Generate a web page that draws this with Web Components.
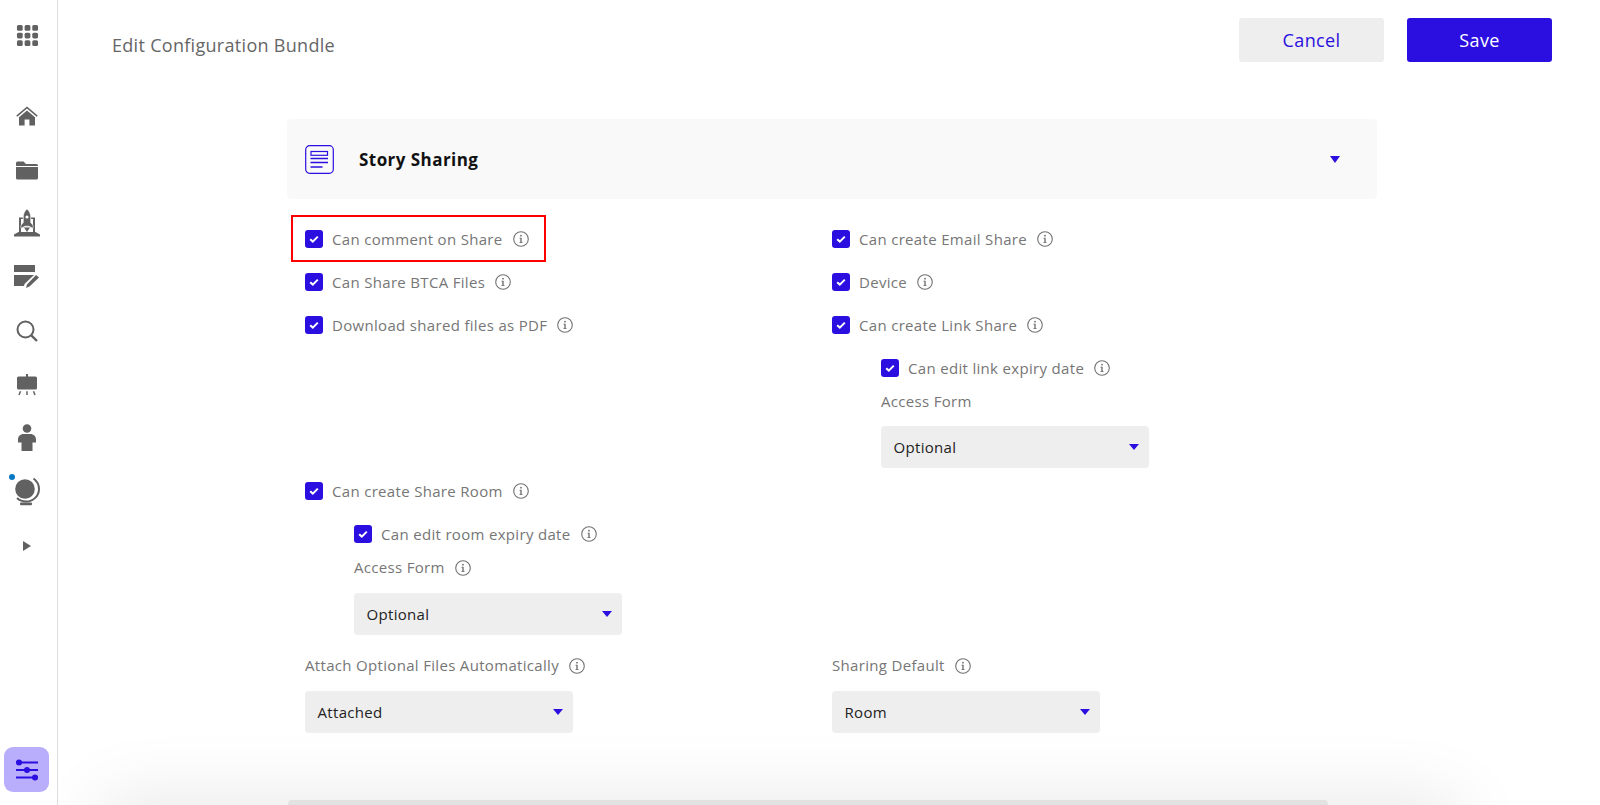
<!DOCTYPE html>
<html><head><meta charset="utf-8">
<style>
html,body{margin:0;height:805px;overflow:hidden;background:#fff;font-family:"Open Sans","Noto Sans",sans-serif}
</style></head><body>
<template id="t-check"><style>
:host{display:flex;align-items:center;height:43px;font-size:15px;letter-spacing:.32px;color:#767676}
.b{width:18px;height:18px;border-radius:3px;background:#2a0fe0;display:flex;align-items:center;justify-content:center;margin-right:9px;flex:none}
.i{margin-left:10px;margin-top:1px}
</style><span class="b"><svg width="12" height="12" viewBox="0 0 12 12"><path d="M2.200 6.200 4.800 8.600 9.800 3.600" fill="none" stroke="#fff" stroke-width="2"/></svg></span><slot></slot><x-info class="i"></x-info></template>

<template id="t-info"><style>:host{display:inline-flex;flex:none}</style><svg width="16" height="16" viewBox="0 0 16 16"><circle cx="8" cy="8" r="7.300" fill="none" stroke="#727272" stroke-width="1.100"/><rect x="7.300" y="6.800" width="1.400" height="4.800" fill="#727272"/><rect x="6.500" y="6.800" width="1.500" height=".9" fill="#727272"/><rect x="6.500" y="11" width="3" height=".9" fill="#727272"/><circle cx="8" cy="4.700" r=".9" fill="#727272"/></svg></template>

<template id="t-select"><style>
:host{display:flex;align-items:center;justify-content:space-between;height:42px;width:268px;box-sizing:border-box;padding:0 10.500px 0 12.500px;background:#eee;border-radius:4px;font-size:15px;letter-spacing:.32px;color:#222}
i{width:0;height:0;border-left:5px solid transparent;border-right:5px solid transparent;border-top:6.500px solid #2a0fe0}
</style><slot></slot><i></i></template>

<template id="t-label"><style>
:host{display:flex;align-items:center;font-size:15px;letter-spacing:.32px;color:#767676}
x-info{margin-left:10px;margin-top:1px}
</style><slot></slot></template>

<template id="t-nav"><style>
:host{display:flex;align-items:center;justify-content:center;width:54px;height:53.750px;color:#616161}
::slotted(svg){display:block}
</style><slot></slot></template>

<template id="t-sidebar"><style>
:host{display:flex;flex-direction:column;flex:none;height:805px;box-sizing:border-box;border-right:1px solid #ddd;width:58px}
.top{width:54px;height:89px;box-sizing:border-box;padding-top:24px;display:flex;justify-content:center}
.tile{margin:auto 0 13px 4px;width:45px;height:45px;border-radius:9px;background:#b9aefc;display:flex;align-items:center;justify-content:center}
</style>
<div class="top"><slot name="top"></slot></div><slot></slot><div class="tile"><slot name="tile"></slot></div></template>

<template id="t-panel"><style>
:host{display:flex;align-items:center;height:80px;background:#f9f9f9;border-radius:4px;padding:0 37px 0 18px;box-sizing:border-box}
.t{font-size:17px;font-weight:700;letter-spacing:.45px;color:#111;margin-left:25px;flex:1}
svg{display:block}
i{width:0;height:0;margin-top:1px;border-left:5.500px solid transparent;border-right:5.500px solid transparent;border-top:7px solid #2a0fe0}
</style><svg width="29" height="29" viewBox="0 0 29 29" fill="none" stroke="#2a0fe0"><rect x=".7" y=".7" width="27.600" height="27.600" rx="4" stroke-width="1.200"/><rect x="6" y="6.500" width="16.500" height="3.800" stroke-width="1.200"/><path d="M5.500 13.500h17.500M5.500 17.500h17.500M5.500 22h12" stroke-width="1.300"/></svg><span class="t"><slot></slot></span><i></i></template>

<template id="t-button"><style>
:host{display:flex;align-items:center;justify-content:center;width:145px;height:44px;box-sizing:border-box;padding-bottom:1px;border-radius:3px;font-size:18px;letter-spacing:.35px;background:#eee;color:#2a0fe0}
:host([primary]){background:#2a0fe0;color:#fff}
</style><slot></slot></template>

<template id="t-app"><style>
:host{display:flex;height:805px;overflow:hidden}
main{flex:1;min-width:0;display:flex;flex-direction:column;overflow:hidden}
header{display:flex;align-items:flex-start;height:119px;flex:none;box-sizing:border-box;padding:18px 48px 0 54px}
h1{margin:16px auto 0 0;font-size:18px;letter-spacing:.3px;line-height:22px;font-weight:400;color:#666}
.btns{display:flex;gap:23px}
.body{width:1090px;margin-left:229px}
.grid{display:grid;grid-template-columns:527px 1fr;padding:18px 0 0 18px}
.col{display:flex;flex-direction:column}
.nest{margin-left:49px}
.fld x-label{height:22px;margin-bottom:15px}
.row3{padding-top:19px}
.ghost{margin-top:auto;margin-left:230px;flex:none;height:5px;width:1040px;background:#e2e2e2;border-radius:4px 4px 0 0;box-shadow:-28px 155px 70px 160px rgba(0,0,0,.085)}
.mark{outline:2px solid #f00;margin-left:-12px;padding-left:12px;width:239px;height:43px}
</style>
<x-sidebar></x-sidebar>
<main>
<header><h1>Edit Configuration Bundle</h1><div class="btns"><x-button>Cancel</x-button><x-button primary>Save</x-button></div></header>
<div class="body">
<x-panel>Story Sharing</x-panel>
<div class="grid">
  <div class="col">
    <x-check class="mark">Can comment on Share</x-check>
    <x-check>Can Share BTCA Files</x-check>
    <x-check>Download shared files as PDF</x-check>
  </div>
  <div class="col">
    <x-check>Can create Email Share</x-check>
    <x-check>Device</x-check>
    <x-check>Can create Link Share</x-check>
    <div class="nest">
      <x-check>Can edit link expiry date</x-check>
      <x-label style="height:22px;margin:1px 0 14px">Access Form</x-label>
      <x-select>Optional</x-select>
    </div>
  </div>
  <div class="col">
    <x-check style="margin-top:1px">Can create Share Room</x-check>
    <div class="nest">
      <x-check>Can edit room expiry date</x-check>
      <x-label info style="height:22px;margin:1px 0 15px">Access Form</x-label>
      <x-select>Optional</x-select>
    </div>
  </div>
  <div></div>
  <div class="col fld row3">
    <x-label info>Attach Optional Files Automatically</x-label>
    <x-select>Attached</x-select>
  </div>
  <div class="col fld row3">
    <x-label info>Sharing Default</x-label>
    <x-select>Room</x-select>
  </div>
</div>
</div>
<div class="ghost"></div>
</main></template>

<x-app></x-app>

<script>
const tpl=id=>document.getElementById(id).content.cloneNode(true);
function simple(tag,id,extra){customElements.define(tag,class extends HTMLElement{constructor(){super();const s=this.attachShadow({mode:'open'});s.appendChild(tpl(id));extra&&extra(this,s)}})}
simple('x-info','t-info');
simple('x-check','t-check');
simple('x-select','t-select');
simple('x-label','t-label',(h,s)=>{if(h.hasAttribute('info'))s.appendChild(document.createElement('x-info'))});
simple('x-nav','t-nav');
simple('x-panel','t-panel');
simple('x-button','t-button');
const ICONS={
grid:'<svg width="23" height="23" viewBox="0 0 24 24" fill="#616161">'+[1,9,17].flatMap(y=>[1,9,17].map(x=>`<rect x="${x}" y="${y}" width="6" height="6" rx="1.600"/>`)).join('')+'</svg>',
home:'<svg width="24" height="24" viewBox="0 0 24 24" fill="#616161"><path d="M12 2.500 1.300 11.600l1 1.200L12 4.600l9.700 8.200 1-1.200z"/><path d="M12 6.400 4 13.200V21.500h5.600v-6h4.800v6H20v-8.300z"/></svg>',
folder:'<svg width="24" height="24" viewBox="0 0 24 24" fill="#616161"><path d="M1 5a1.500 1.500 0 0 1 1.500-1.500h6L11 6h10.500A1.500 1.500 0 0 1 23 7.500V8H1z"/><path d="M1 9h22v11a1.500 1.500 0 0 1-1.500 1.500h-19A1.500 1.500 0 0 1 1 20z"/></svg>',
rocket:'<svg width="28" height="28" viewBox="0 0 28 28" fill="#616161"><path d="M6 8.500h4.500V10H8v13H6zM17.500 8.500H22V23h-2V10h-2.500z"/><path d="M5.500 23h17l4.500 2.600V27.500H1V25.600z"/><path d="M14 0c2.600 2.200 3.700 5 3.700 8v5.500L20 16.200v3.300l-4-2.300h-4l-4 2.300v-3.300l2.300-2.700V8c0-3 1.100-5.800 3.700-8z" stroke="#fff" stroke-width=".6"/><path d="M11 18.500h6L14 23z"/><circle cx="14" cy="8" r="1.600" fill="#fff"/></svg>',
edit:'<svg width="26" height="26" viewBox="0 0 26 26" fill="#616161"><rect x="0" y="1" width="21" height="7"/><path d="M0 11h20L10.500 20 10 22H0z"/><path d="M22 11l3 2.500-9.500 9-3.500 1.500 1-3.500z"/></svg>',
search:'<svg width="24" height="24" viewBox="0 0 24 24" fill="none" stroke="#616161" stroke-width="2"><circle cx="10.500" cy="10.500" r="8"/><path d="M16.300 16.300 22 22" stroke-width="2.400"/></svg>',
board:'<svg width="24" height="24" viewBox="0 0 24 24" fill="#616161"><rect x="11" y="1" width="2" height="4"/><rect x="2" y="3.500" width="20" height="13" rx="1.500"/><path d="M5.500 18.200 4 22M12 18.200V22M18.500 18.200 20 22" stroke="#616161" stroke-width="1.500" fill="none"/></svg>',
person:'<svg width="20" height="28" viewBox="0 0 20 28" fill="#616161"><circle cx="10" cy="4.500" r="4.300"/><path d="M6.500 10h7c3 0 5.500 2.300 5.500 5.300v3.200h-3.500V27h-11v-8.500H1v-3.200C1 12.300 3.500 10 6.500 10z"/></svg>',
globe:'<svg width="30" height="30" viewBox="0 0 30 30"><circle cx="13" cy="12" r="9.800" fill="#616161"/><path d="M21.500 1.500C25.500 4.500 27 8 27 12c0 7-5.800 12.500-13 12.500-3.500 0-6.500-1.200-9-3.500" fill="none" stroke="#616161" stroke-width="2"/><rect x="8" y="25.500" width="12" height="2.800" rx="1" fill="#616161"/></svg>',
tri:'<svg width="10" height="12" viewBox="0 0 10 12" fill="#616161"><path d="M1 1v10l8-5z"/></svg>',
tune:'<svg width="24" height="24" viewBox="0 0 24 24" fill="#2a0fe0"><path d="M1 4.500h22M1 12h22M1 19.500h22" stroke="#2a0fe0" stroke-width="1.800"/><circle cx="4" cy="4.500" r="3"/><circle cx="12" cy="12" r="3"/><circle cx="20" cy="19.500" r="3"/></svg>'};
customElements.define('x-sidebar',class extends HTMLElement{constructor(){super();const s=this.attachShadow({mode:'open'});s.appendChild(tpl('t-sidebar'));
 this.innerHTML=`<span slot="top" style="display:block;height:24px">${ICONS.grid}</span>`+['home','folder','rocket','edit','search','board','person','globe','tri'].map(n=>`<x-nav>${ICONS[n]}</x-nav>`).join('')+`<span slot="tile" style="display:block;height:24px">${ICONS.tune}</span>`;
 const g=this.children[8];const d=document.createElement('span');d.style.cssText='position:absolute;left:9px;top:474px;width:6px;height:6px;border-radius:50%;background:#0a78c2';g.appendChild(d);}});
customElements.define('x-app',class extends HTMLElement{constructor(){super();const s=this.attachShadow({mode:'open'});s.appendChild(tpl('t-app'));}});
</script>
</body></html>
